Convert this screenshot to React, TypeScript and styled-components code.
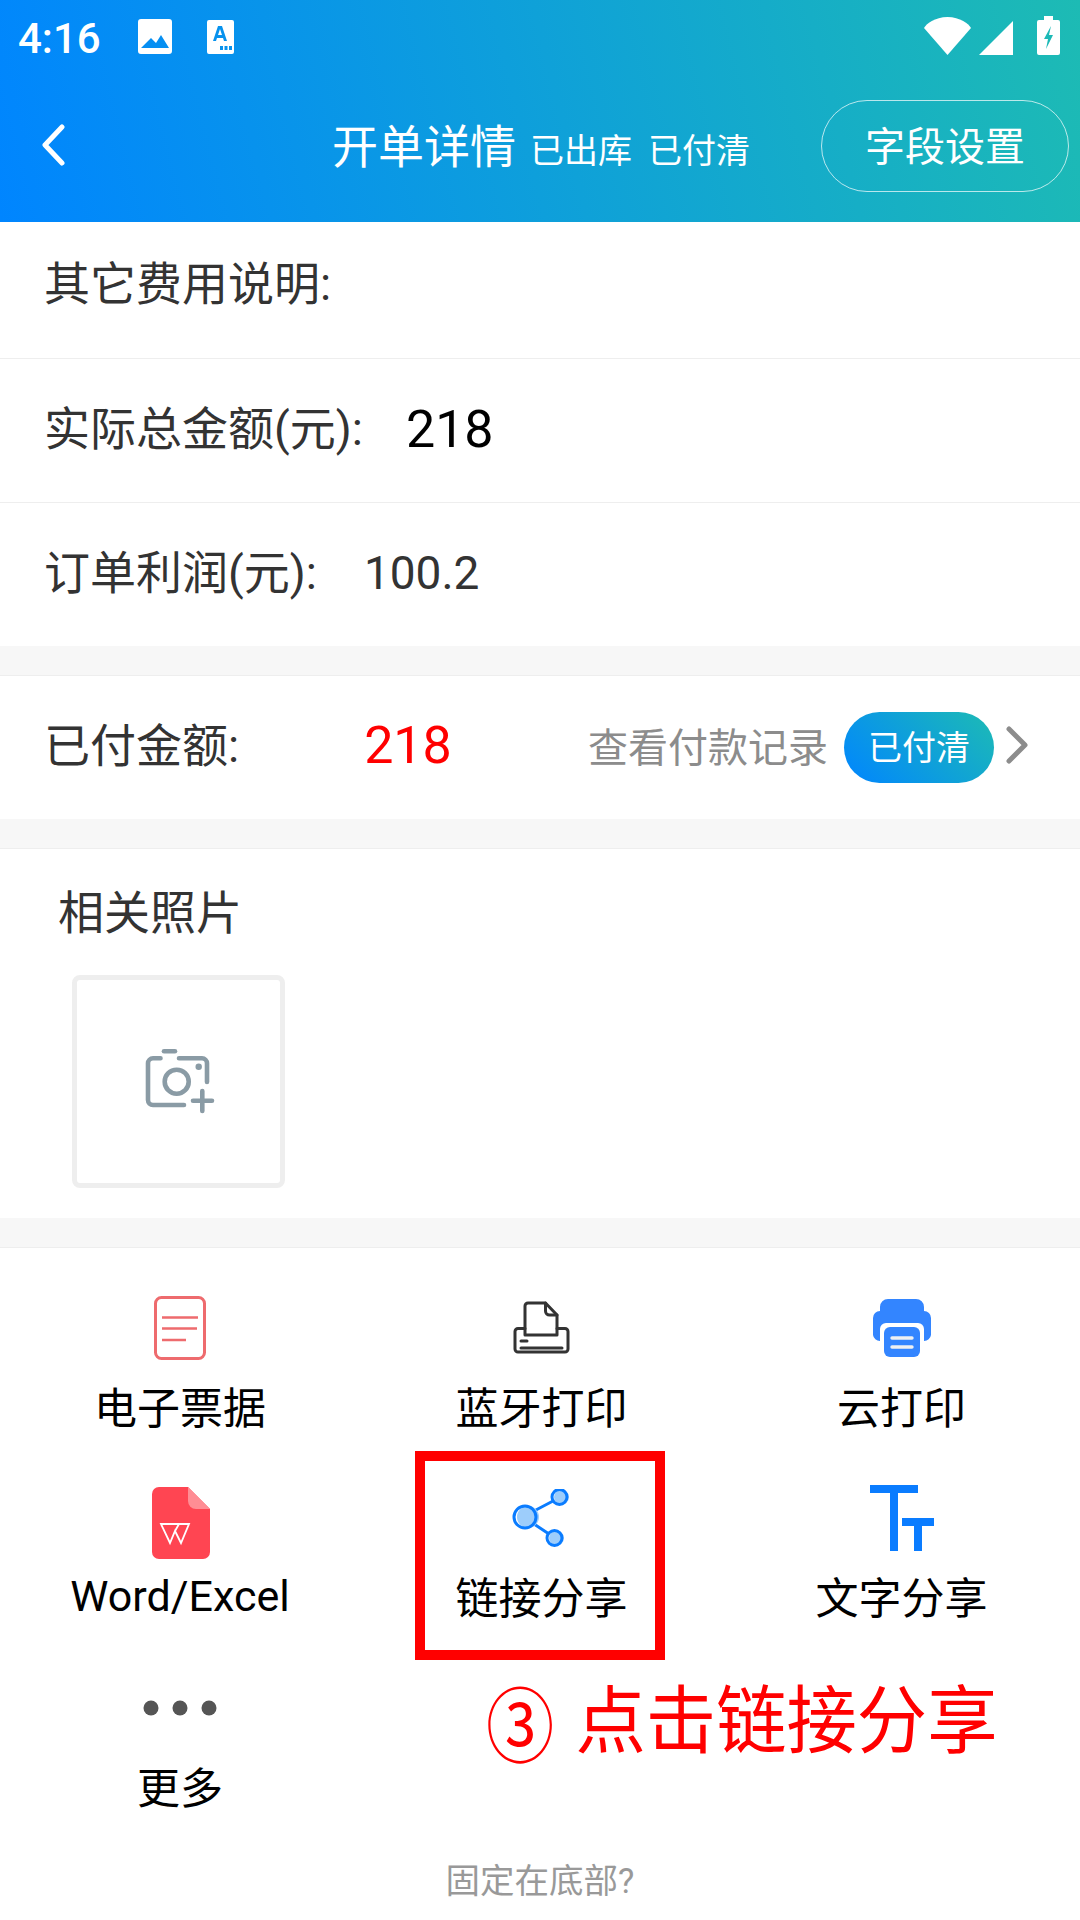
import React from "react";
import styled, { createGlobalStyle } from "styled-components";

const Global = createGlobalStyle`
  html, body { margin: 0; padding: 0; background: #fff; }
  * { box-sizing: border-box; }
  body { font-family: Roboto, "Noto Sans CJK SC", sans-serif; }
`;

const Page = styled.div`
  position: relative;
  width: 1080px;
  height: 1920px;
  overflow: hidden;
  background: #fff;
  display: flex;
  flex-direction: column;
`;

const Header = styled.header`
  height: 222px;
  flex: none;
  background: linear-gradient(76deg, #0085ff 0%, #1dbbb4 100%);
  color: #fff;
  display: flex;
  flex-direction: column;
`;

const StatusBar = styled.div`
  height: 72px;
  flex: none;
  padding: 16px 20px 0 18px;
  display: flex;
  align-items: flex-start;
`;

const Clock = styled.span`
  font-size: 42px;
  line-height: 40px;
  font-weight: 500;
  margin-top: 3px;
  margin-right: 39px;
  width: 81px;
`;

const StatusIcon = styled.svg<{ $gap?: number; $top?: number }>`
  display: block;
  flex: none;
  margin-left: ${(p) => p.$gap ?? 0}px;
  margin-top: ${(p) => p.$top ?? 0}px;
`;

const Spacer = styled.div`
  flex: 1;
`;

const Nav = styled.nav`
  flex: 1;
  display: flex;
  align-items: center;
  padding: 0 11px 8px 41px;
`;

const BackIcon = styled.svg`
  margin-top: 4px;
`;

const Title = styled.div`
  margin-left: 267px;
  display: flex;
  align-items: baseline;
`;

const TitleMain = styled.span`
  font-size: 46px;
  margin-right: 14px;
`;

const TitleSub = styled.span`
  font-size: 34px;
  margin-right: 16px;
`;

const OutlineButton = styled.div`
  margin-left: auto;
  margin-top: 6px;
  width: 248px;
  height: 92px;
  padding-bottom: 4px;
  border: 1px solid rgba(255, 255, 255, 0.7);
  border-radius: 46px;
  font-size: 40px;
  display: flex;
  align-items: center;
  justify-content: center;
`;

const Row = styled.div<{ $h: number; $line?: boolean; $lift?: number }>`
  height: ${(p) => p.$h}px;
  padding: 0 45px ${(p) => p.$lift ?? 12}px 44px;
  display: flex;
  align-items: center;
  color: #333;
  font-size: 46px;
  border-bottom: ${(p) => (p.$line ? "1px solid #eeeeee" : "none")};
  flex: none;
`;

const RowValue = styled.span<{ $left: number; $size?: number; $color?: string; $drop: number }>`
  margin-left: ${(p) => p.$left}px;
  margin-top: ${(p) => p.$drop}px;
  font-size: ${(p) => p.$size ?? 46}px;
  color: ${(p) => p.$color ?? "#333"};
`;

const Gap = styled.div`
  height: 30px;
  flex: none;
  background: #f7f7f7;
  border-bottom: 1px solid #eeeeee;
`;

const RowRight = styled.div`
  margin-left: auto;
  margin-top: 11px;
  margin-right: 6px;
  display: flex;
  align-items: center;
`;

const RecordLink = styled.span`
  font-size: 40px;
  color: #8c8c8c;
  margin-right: 16px;
  margin-bottom: 4px;
`;

const Pill = styled.span`
  width: 150px;
  height: 71px;
  padding-bottom: 4px;
  border-radius: 36px;
  background: linear-gradient(45deg, #0085ff 0%, #1dbbb4 100%);
  color: #fff;
  font-size: 34px;
  display: flex;
  align-items: center;
  justify-content: center;
  margin-right: 12px;
`;

const ChevronIcon = styled.svg`
  margin-bottom: 5px;
`;

const Photos = styled.section`
  height: 369px;
  flex: none;
  padding: 34px 0 0 58px;
  display: flex;
  flex-direction: column;
  color: #333;
  font-size: 46px;
`;

const PhotoTitle = styled.div`
  line-height: 60px;
`;

const PhotoBox = styled.div`
  margin: 32px 0 0 14px;
  width: 213px;
  height: 213px;
  border: 5px solid #eeeeee;
  border-radius: 8px;
  display: flex;
  align-items: center;
  justify-content: center;
`;

const CameraSvg = styled.svg`
  margin-left: 5px;
  margin-bottom: 2px;
`;

const ActionGrid = styled.section`
  padding-top: 45px;
  flex: none;
  display: grid;
  grid-template-columns: 360px 363px 357px;
  grid-template-rows: 190px 190px 165px;
`;

const Action = styled.div`
  display: flex;
  flex-direction: column;
  align-items: center;
`;

const IconSlot = styled.div<{ $drop?: number; $shift?: number }>`
  height: 70px;
  display: flex;
  align-items: center;
  justify-content: center;
  padding-top: ${(p) => p.$drop ?? 0}px;
  padding-left: ${(p) => p.$shift ?? 0}px;
`;

const ActionLabel = styled.div<{ $latin?: boolean }>`
  margin-top: ${(p) => (p.$latin ? 15 : 18)}px;
  font-size: 43px;
  line-height: 56px;
  color: #000;
`;

const PinNote = styled.div`
  margin-top: 20px;
  text-align: center;
  font-size: 34.5px;
  line-height: 46px;
  color: #999;
`;

const HighlightBox = styled.div`
  position: absolute;
  left: 415px;
  top: 1451px;
  width: 250px;
  height: 209px;
  border: 10px solid #ff0000;
`;

const Annotation = styled.div`
  position: absolute;
  left: 485px;
  top: 1666px;
  display: flex;
  align-items: center;
  color: #ff0000;
  font-size: 70px;
  line-height: 100px;
  white-space: nowrap;
  transform-origin: left center;
  transform: scale(1.005, 1.06);
`;

const AnnotationMark = styled.span`
  margin-right: 20px;
  margin-top: 12px;
  transform: scale(0.97, 1.1);
`;

const Chevron = () => (
  <ChevronIcon width="23" height="38" viewBox="0 0 23 38" fill="none" stroke="#8c8c8c" strokeWidth="5" strokeLinecap="round" strokeLinejoin="round">
    <path d="M3 3 L19 19 L3 35" />
  </ChevronIcon>
);

const DocIcon = () => (
  <svg width="52" height="64" viewBox="0 0 52 64" fill="none" stroke="#ee6b6e">
    <rect x="1.5" y="1.5" width="49" height="61" rx="6" strokeWidth="3" />
    <path d="M8 21.5H44M8 32.5H43M8 44H32" strokeWidth="2.6" />
  </svg>
);

const BtPrinterIcon = () => (
  <svg width="58" height="54" viewBox="0 0 58 54" fill="none" stroke="#333" strokeWidth="3" strokeLinejoin="round" strokeLinecap="round">
    <path d="M12 34V5a3 3 0 0 1 3-3H32.5L44 14V34Z" />
    <path d="M32.5 2V10a4 4 0 0 0 4 4H44" />
    <path d="M12 27.5H5a3 3 0 0 0-3 3V48a3 3 0 0 0 3 3H52a3 3 0 0 0 3-3V30.5a3 3 0 0 0-3-3H44" />
    <path d="M8 40H14M8 47H49" />
  </svg>
);

const CloudPrinterIcon = () => (
  <svg width="58" height="58" viewBox="0 0 58 58">
    <path fill="#3385ff" d="M7 12V8a8 8 0 0 1 8-8h28a8 8 0 0 1 8 8v4a7 7 0 0 1 7 7v17a7 7 0 0 1-7 6V30a6 6 0 0 0-6-6H13a6 6 0 0 0-6 6v12a7 7 0 0 1-7-6V19a7 7 0 0 1 7-7Z" />
    <rect x="11" y="28" width="36" height="30" rx="6" fill="#3385ff" />
    <path d="M19 39H39M19 48H39" stroke="#eef0f2" strokeWidth="3.4" strokeLinecap="round" />
  </svg>
);

const WpsIcon = () => (
  <svg width="58" height="72" viewBox="0 0 58 72">
    <path fill="#ff4552" d="M7 0H36L58 22V65a7 7 0 0 1-7 7H7a7 7 0 0 1-7-7V7a7 7 0 0 1 7-7Z" />
    <path fill="#ff8d94" d="M36 0L58 22H44a8 8 0 0 1-8-8Z" />
    <path fill="none" stroke="#fff" strokeWidth="1.8" d="M9 37H37L29 56L23 44L18 56ZM23 44L27 37" />
  </svg>
);

const ShareIcon = () => (
  <svg width="60" height="58" viewBox="0 0 60 58" fill="none">
    <path d="M22 22L42 11.5M22 35L37 45" stroke="#0a7cff" strokeWidth="3" />
    <circle cx="16" cy="28" r="11" fill="#9dcdfb" />
    <circle cx="49.5" cy="8" r="7.5" fill="#9dcdfb" />
    <circle cx="44.5" cy="49" r="7.5" fill="#9dcdfb" />
    <g stroke="#0a7cff" strokeWidth="3">
      <circle cx="13" cy="28" r="11" />
      <circle cx="47.5" cy="8" r="7.5" />
      <circle cx="42.5" cy="49" r="7.5" />
    </g>
  </svg>
);

const TextIcon = () => (
  <svg width="64" height="66" viewBox="0 0 64 66" fill="#0a7cff">
    <path d="M0 0H48V8H28V66H20V8H0Z" />
    <path d="M32 33H64V41H52V66H44V41H32Z" />
  </svg>
);

const DotsIcon = () => (
  <svg width="74" height="16" viewBox="0 0 74 16" fill="#555">
    <circle cx="8" cy="8" r="7.5" />
    <circle cx="37" cy="8" r="7.5" />
    <circle cx="66" cy="8" r="7.5" />
  </svg>
);

const CameraIcon = () => (
  <CameraSvg width="72" height="66" viewBox="105 98 72 66" fill="none" stroke="#8a9ba5" strokeWidth="4.6" strokeLinecap="round">
    <path d="M124 101.3H135" />
    <path d="M120.5 108.3H113a5 5 0 0 0-5 5V150a5 5 0 0 0 5 5H144" />
    <path d="M139 108.3H162a5 5 0 0 1 5 5V132" />
    <circle cx="136.7" cy="131.7" r="12" />
    <circle cx="158.7" cy="116.7" r="3.2" fill="#8a9ba5" stroke="none" />
    <path d="M153 150.7H172M162.3 141V161" />
  </CameraSvg>
);

const actions: { label: string; icon: React.ReactNode; drop?: number; shift?: number; latin?: boolean }[] = [
  { label: "电子票据", icon: <DocIcon /> },
  { label: "蓝牙打印", icon: <BtPrinterIcon /> },
  { label: "云打印", icon: <CloudPrinterIcon /> },
  { label: "Word/Excel", icon: <WpsIcon />, drop: 10, shift: 2, latin: true },
  { label: "链接分享", icon: <ShareIcon /> },
  { label: "文字分享", icon: <TextIcon /> },
  { label: "更多", icon: <DotsIcon /> },
];

export default function App() {
  return (
    <Page>
      <Global />
      <Header>
        <StatusBar>
          <Clock>4:16</Clock>
          <StatusIcon $top={3} width="34" height="35" viewBox="0 0 34 35">
            <path fill="#fff" fillRule="evenodd" d="M3 0H31a3 3 0 0 1 3 3V32a3 3 0 0 1-3 3H3a3 3 0 0 1-3-3V3a3 3 0 0 1 3-3ZM3 29H31L23 16L18 24L13 19Z" />
          </StatusIcon>
          <StatusIcon $gap={35} $top={4} width="27" height="34" viewBox="0 0 27 34">
            <path fill="#fff" fillRule="evenodd" d="M2 0H25a2 2 0 0 1 2 2V32a2 2 0 0 1-2 2H2a2 2 0 0 1-2-2V2a2 2 0 0 1 2-2ZM11 6L6 21H9L10 18H16L17 21H20L15 6ZM11 15L13 9L15 15ZM13 26h3v4h-3ZM17.5 26h3v4h-3ZM22 26h3v4h-3Z" />
          </StatusIcon>
          <Spacer />
          <StatusIcon $top={1} width="47" height="38" viewBox="0 0 47 38">
            <path fill="#fff" d="M23.5 38L0 11C2 7 11 0 23.5 0S45 7 47 11Z" />
          </StatusIcon>
          <StatusIcon $gap={8} $top={5} width="34" height="34" viewBox="0 0 34 34">
            <path fill="#fff" d="M34 0V34H0Z" />
          </StatusIcon>
          <StatusIcon $gap={24} width="23" height="39" viewBox="0 0 23 39">
            <path fill="#fff" fillRule="evenodd" d="M7 0H16V4H21a2 2 0 0 1 2 2V37a2 2 0 0 1-2 2H2a2 2 0 0 1-2-2V6a2 2 0 0 1 2-2H7ZM14 10L7 23H11L9 33L16 19H12Z" />
          </StatusIcon>
        </StatusBar>
        <Nav>
          <BackIcon width="24" height="42" viewBox="0 0 24 42" fill="none" stroke="#fff" strokeWidth="5" strokeLinecap="round" strokeLinejoin="round">
            <path d="M21 3L4 21L21 39" />
          </BackIcon>
          <Title>
            <TitleMain>开单详情</TitleMain>
            <TitleSub>已出库</TitleSub>
            <TitleSub>已付清</TitleSub>
          </Title>
          <OutlineButton>字段设置</OutlineButton>
        </Nav>
      </Header>

      <Row $h={137} $line $lift={20}>其它费用说明:</Row>
      <Row $h={144} $line>
        实际总金额(元):
        <RowValue $left={43} $size={52} $color="#000" $drop={10}>218</RowValue>
      </Row>
      <Row $h={143}>
        订单利润(元):
        <RowValue $left={47} $drop={8}>100.2</RowValue>
      </Row>
      <Gap />
      <Row $h={143}>
        已付金额:
        <RowValue $left={125} $size={52} $color="#ff0000" $drop={7}>218</RowValue>
        <RowRight>
          <RecordLink>查看付款记录</RecordLink>
          <Pill>已付清</Pill>
          <Chevron />
        </RowRight>
      </Row>
      <Gap />
      <Photos>
        <PhotoTitle>相关照片</PhotoTitle>
        <PhotoBox>
          <CameraIcon />
        </PhotoBox>
      </Photos>
      <Gap />
      <ActionGrid>
        {actions.map((a) => (
          <Action key={a.label}>
            <IconSlot $drop={a.drop} $shift={a.shift}>{a.icon}</IconSlot>
            <ActionLabel $latin={a.latin}>{a.label}</ActionLabel>
          </Action>
        ))}
      </ActionGrid>
      <PinNote>固定在底部?</PinNote>

      <HighlightBox />
      <Annotation>
        <AnnotationMark>③</AnnotationMark>
        点击链接分享
      </Annotation>
    </Page>
  );
}
